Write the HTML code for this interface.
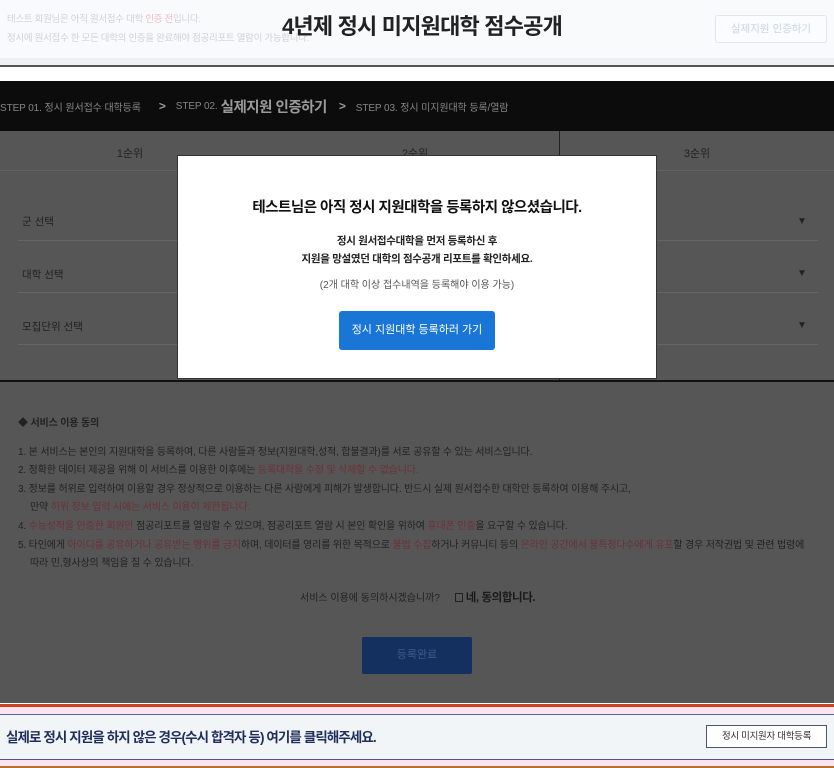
<!DOCTYPE html>
<html><head><meta charset="utf-8">
<style>
*{margin:0;padding:0;box-sizing:border-box}
body{width:834px;height:768px;overflow:hidden;background:#565656;font-family:"Liberation Sans","Noto Sans CJK KR",sans-serif;position:relative}
.abs{position:absolute}
.hdr{left:0;top:0;width:834px;height:60px;background:#f8fafc}
.hdr2{left:0;top:58px;width:834px;height:7px;background:#eef1f4}
.hl{left:0;top:65px;width:834px;height:2px;background:#555}
.wh{left:0;top:67px;width:834px;height:14px;background:#fff}
.blk{left:0;top:81px;width:834px;height:50px;background:#0c0c0c;color:#858585;font-size:10px;display:flex;align-items:center;white-space:nowrap;letter-spacing:-0.1px}
.blk b{color:#9a9a9a;font-size:14.5px;margin-left:3px;letter-spacing:-0.5px}
.chev{margin:0 10px 0 18px;font-size:12px;color:#9a9a9a;font-weight:bold}
.faint{font-size:9.5px;color:#cfd3d8;left:7px;letter-spacing:-0.3px}
.t{font-size:11px;color:#222;text-align:center}
.sel{font-size:10.5px;color:#222}
.line{height:1px;background:#666}
.arr{font-size:10px;color:#222}
.modal{left:177px;top:155px;width:480px;height:224px;background:#fff;border:1px solid #333;text-align:center}
.terms{left:18px;font-size:10px;color:#222;white-space:nowrap;letter-spacing:-0.15px}
.r{color:#6e3037}
</style></head><body>
<div class="abs hdr"></div><div class="abs hdr2"></div>
<div class="abs faint" style="top:11px">테스트 회원님은 아직 원서접수 대학 <span style="color:#f3b9c0">인증 전</span>입니다.</div>
<div class="abs faint" style="top:30px">정시에 원서접수 한 모든 대학의 인증을 완료해야 점공리포트 열람이 가능합니다.</div>
<div class="abs" style="left:0;width:834px;top:9px;text-align:center;font-size:22px;font-weight:bold;color:#222;letter-spacing:-0.8px;padding-left:10px">4년제 정시 미지원대학 점수공개</div>
<div class="abs" style="left:715px;top:15px;width:112px;height:28px;border:1px solid #dfe6ee;border-radius:3px;background:#fafcfe;color:#c8d6e6;font-size:10.5px;text-align:center;line-height:26px">실제지원 인증하기</div>
<div class="abs hl"></div><div class="abs wh"></div>
<div class="abs blk"><span>STEP 01. 정시 원서접수 대학등록</span><span class="chev">&gt;</span><span>STEP 02.</span><b>실제지원 인증하기</b><span class="chev" style="margin-left:12px">&gt;</span><span>STEP 03. 정시 미지원대학 등록/열람</span></div>
<div class="abs" style="left:559px;top:131px;width:1px;height:250px;background:#222"></div>
<div class="abs t" style="left:0;width:260px;top:145px">1순위</div>
<div class="abs t" style="left:280px;width:270px;top:145px">2순위</div>
<div class="abs t" style="left:560px;width:274px;top:145px">3순위</div>
<div class="abs line" style="left:0;top:170px;width:834px;background:#626262"></div>
<div class="abs sel" style="left:22px;top:214px">군 선택</div>
<div class="abs sel" style="left:22px;top:267px">대학 선택</div>
<div class="abs sel" style="left:22px;top:319px">모집단위 선택</div>
<div class="abs line" style="left:18px;top:240px;width:800px"></div>
<div class="abs line" style="left:18px;top:292px;width:800px"></div>
<div class="abs line" style="left:18px;top:344px;width:800px"></div>
<div class="abs arr" style="left:797px;top:216px">▼</div>
<div class="abs arr" style="left:797px;top:268px">▼</div>
<div class="abs arr" style="left:797px;top:320px">▼</div>
<div class="abs" style="left:0;top:380px;width:834px;height:2px;background:#111"></div>
<div class="abs modal">
 <div style="margin-top:40px;font-size:14.5px;font-weight:bold;color:#111;letter-spacing:-0.5px">테스트님은 아직 정시 지원대학을 등록하지 않으셨습니다.</div>
 <div style="margin-top:15px;font-size:10.5px;font-weight:bold;color:#222;line-height:18px;letter-spacing:-0.3px">정시 원서접수대학을 먼저 등록하신 후<br>지원을 망설였던 대학의 점수공개 리포트를 확인하세요.</div>
 <div style="margin-top:8px;font-size:10px;color:#555">(2개 대학 이상 접수내역을 등록해야 이용 가능)</div>
 <div style="margin:20px auto 0;width:156px;height:39px;background:#1a76d6;border-radius:3px;color:#fff;font-size:11px;line-height:39px">정시 지원대학 등록하러 가기</div>
</div>
<div class="abs terms" style="top:414px;font-weight:bold;font-size:10px">◆ 서비스 이용 동의</div>
<div class="abs terms" style="top:443px">1. 본 서비스는 본인의 지원대학을 등록하여, 다른 사람들과 정보(지원대학,성적, 합불결과)를 서로 공유할 수 있는 서비스입니다.</div>
<div class="abs terms" style="top:461px">2. 정확한 데이터 제공을 위해 이 서비스를 이용한 이후에는 <span class="r">등록대학을 수정 및 삭제할 수 없습니다.</span></div>
<div class="abs terms" style="top:480px">3. 정보를 허위로 입력하여 이용할 경우 정상적으로 이용하는 다른 사람에게 피해가 발생합니다. 반드시 실제 원서접수한 대학만 등록하여 이용해 주시고,</div>
<div class="abs terms" style="top:498px;left:30px">만약 <span class="r">허위 정보 입력 시에는 서비스 이용이 제한됩니다.</span></div>
<div class="abs terms" style="top:517px">4. <span class="r">수능성적을 인증한 회원만</span> 점공리포트를 열람할 수 있으며, 점공리포트 열람 시 본인 확인을 위하여 <span class="r">휴대폰 인증</span>을 요구할 수 있습니다.</div>
<div class="abs terms" style="top:536px">5. 타인에게 <span class="r">아이디를 공유하거나 공유받는 행위를 금지</span>하며, 데이터를 영리를 위한 목적으로 <span class="r">불법 수집</span>하거나 커뮤니티 등의 <span class="r">온라인 공간에서 불특정다수에게 유포</span>할 경우 저작권법 및 관련 법령에</div>
<div class="abs terms" style="top:554px;left:30px">따라 민,형사상의 책임을 질 수 있습니다.</div>
<div class="abs" style="left:300px;top:589px;font-size:10px;color:#222;white-space:nowrap">서비스 이용에 동의하시겠습니까? <span style="display:inline-block;width:8px;height:9px;border:1px solid #222;margin:0 3px 0 12px;vertical-align:-1px"></span><b style="font-size:11.5px;color:#1a1a1a;letter-spacing:-0.4px">네, 동의합니다.</b></div>
<div class="abs" style="left:362px;top:637px;width:110px;height:37px;background:#14305e;border-radius:2px;color:#3c5a8a;font-size:11px;text-align:center;line-height:37px">등록완료</div>
<div class="abs" style="left:0;top:703px;width:834px;height:65px;background:#ffe3f0"></div>
<div class="abs" style="left:0;top:703px;width:834px;height:1px;background:#fff"></div>
<div class="abs" style="left:0;top:704px;width:834px;height:3px;background:#c8421e"></div>
<div class="abs" style="left:0;top:714px;width:834px;height:1px;background:#5b6497"></div>
<div class="abs" style="left:0;top:715px;width:834px;height:44px;background:#f1f5f8"></div>
<div class="abs" style="left:0;top:759px;width:834px;height:1px;background:#4a5590"></div>
<div class="abs" style="left:0;top:766px;width:834px;height:2px;background:#b7702e"></div>
<div class="abs" style="left:6px;top:726px;font-size:13.5px;font-weight:bold;color:#1f2d5c;letter-spacing:-0.9px;white-space:nowrap">실제로 정시 지원을 하지 않은 경우(수시 합격자 등) 여기를 클릭해주세요.</div>
<div class="abs" style="left:706px;top:725px;width:121px;height:23px;border:1px solid #4a5570;background:#fff;color:#333;font-size:9.5px;text-align:center;line-height:21px;letter-spacing:-0.3px">정시 미지원자 대학등록</div>
</body></html>
